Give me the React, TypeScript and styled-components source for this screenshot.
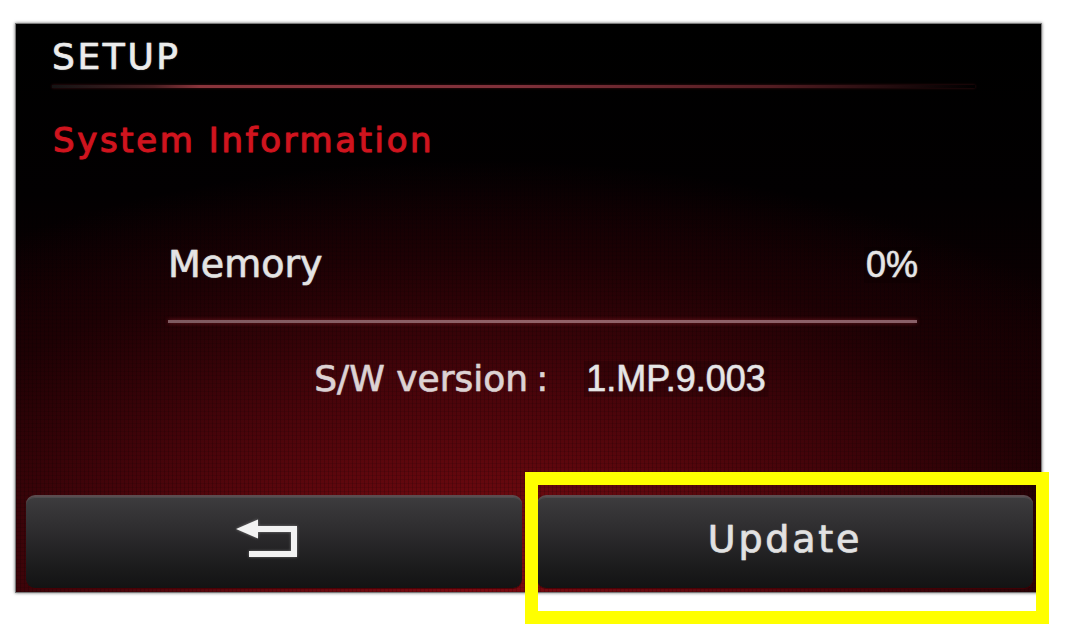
import styled, { createGlobalStyle } from 'styled-components';

const GlobalStyle = createGlobalStyle`
    html, body {
        margin: 0;
        padding: 0;
        background: #ffffff;
    }

    body {
        font-family: 'DejaVu Sans', 'Liberation Sans', sans-serif;
    }
`;

const BackIcon = (): JSX.Element => {
    return (
        <svg width="64" height="42" viewBox="0 0 64 42">
            <polygon points="0,11 22,1.5 22,20.5" fill="#f2f2f2" />
            <path
                d="M20 11 H58 V36 H13"
                fill="none"
                stroke="#f2f2f2"
                strokeWidth="6"
                strokeLinejoin="miter"
            />
        </svg>
    );
};

const App = (): JSX.Element => {
    return (
        <Page>
            <GlobalStyle />
            <Screen>
                <Header>
                    <Title>SETUP</Title>
                </Header>
                <HeaderLine />
                <SectionTitle>System Information</SectionTitle>

                <Info>
                    <InfoRow>
                        <Label>Memory</Label>
                        <Value>0%</Value>
                    </InfoRow>
                    <Divider />
                    <VersionRow>
                        <Label $size={36} $tint="#ddd3d4">S/W version</Label>
                        <Colon>:</Colon>
                        <Value>1.MP.9.003</Value>
                    </VersionRow>
                </Info>

                <ButtonRow>
                    <Button>
                        <IconSlot>
                            <BackIcon />
                        </IconSlot>
                    </Button>
                    <Button>
                        <ButtonText>Update</ButtonText>
                    </Button>
                </ButtonRow>
            </Screen>
            <Highlight />
        </Page>
    );
};

const Page = styled.div`
    background: #ffffff;
    box-sizing: border-box;
    height: 637px;
    overflow: hidden;
    padding: 23px 0 0 15px;
    position: relative;
    width: 1073px;
`;

const Screen = styled.div`
    background:
        repeating-linear-gradient(90deg, rgba(0, 0, 0, 0.16) 0 1px, transparent 1px 4px),
        repeating-linear-gradient(0deg, rgba(0, 0, 0, 0.1) 0 1px, transparent 1px 4px),
        radial-gradient(ellipse 80% 76% at 45% 100%, #7c0a11 0%, #66080e 24%, #45040a 50%, #1e0104 78%, rgba(8, 0, 1, 0) 100%),
        linear-gradient(180deg, #000000 0%, #020001 30%, #140002 62%, #260105 100%);
    border: 1px solid #7a7a7a;
    box-shadow: 0 0 3px rgba(0, 0, 0, 0.55);
    box-sizing: border-box;
    display: flex;
    flex-direction: column;
    height: 570px;
    width: 1027px;
`;

const Header = styled.div`
    padding: 15px 0 0 36px;
`;

const Title = styled.div`
    -webkit-text-stroke: 0.7px #ececec;
    color: #ececec;
    font-size: 36px;
    letter-spacing: 2.6px;
    line-height: 36px;
    text-shadow: 0 0 2px rgba(255, 255, 255, 0.35);
`;

const HeaderLine = styled.div`
    background: linear-gradient(
        90deg,
        rgba(140, 140, 140, 0.14) 0%,
        rgba(130, 55, 60, 0.55) 11%,
        #8a343b 16%,
        #80303a 50%,
        rgba(110, 38, 45, 0.75) 78%,
        rgba(60, 20, 25, 0) 100%
    );
    box-shadow: 0 0 3px rgba(140, 30, 40, 0.5);
    height: 3px;
    margin: 10px 66px 0 36px;
`;

const SectionTitle = styled.div`
    -webkit-text-stroke: 1px #d0141e;
    color: #d0141e;
    font-size: 34px;
    letter-spacing: 2.6px;
    line-height: 35px;
    margin-top: 35px;
    padding-left: 37px;
    text-shadow: 0 0 2px rgba(220, 20, 30, 0.5);
`;

const Info = styled.div`
    display: flex;
    flex-direction: column;
    padding: 0 121px 0 152px;
`;

const InfoRow = styled.div`
    align-items: baseline;
    display: flex;
    justify-content: space-between;
    line-height: 38px;
    margin-top: 87px;
`;

const Label = styled.span<{ $size?: number; $tint?: string }>`
    -webkit-text-stroke: 0.6px ${(p) => p.$tint || '#e4e4e4'};
    color: ${(p) => p.$tint || '#e4e4e4'};
    font-size: ${(p) => p.$size || 38}px;
    line-height: ${(p) => p.$size || 38}px;
    text-shadow: 0 0 2px rgba(255, 255, 255, 0.3);
`;

const Value = styled.span`
    -webkit-text-stroke: 0.5px #e6e6e6;
    background: rgba(0, 0, 0, 0.16);
    color: #e6e6e6;
    font-family: 'Liberation Sans', Arial, sans-serif;
    font-size: 36px;
    line-height: 36px;
    padding: 0 2px;
    text-shadow: 0 0 2px rgba(255, 255, 255, 0.3);
`;

const Divider = styled.div`
    background: linear-gradient(90deg, #7e5a60 0%, #926268 50%, #8a6068 100%);
    box-shadow: 0 0 4px rgba(150, 40, 50, 0.7);
    height: 3px;
    margin: 37px 3px 0 0;
`;

const VersionRow = styled.div`
    align-items: baseline;
    display: flex;
    justify-content: center;
    margin: 38px 6px 0 0;
`;

const Colon = styled.span`
    -webkit-text-stroke: 0.6px #ddd3d4;
    color: #ddd3d4;
    font-size: 36px;
    line-height: 36px;
    margin: 0 36px 0 8px;
`;

const ButtonRow = styled.div`
    display: grid;
    gap: 15px;
    grid-template-columns: 1fr 1fr;
    margin-top: auto;
    padding: 0 8px 4px 10px;
`;

const Button = styled.div`
    align-items: center;
    background: linear-gradient(180deg, #3d3c3e 0%, #2c2b2d 40%, #1c1c1d 75%, #131313 100%);
    border-radius: 9px;
    border-top: 2px solid #5b4c4f;
    box-shadow: inset 0 1px 0 rgba(255, 255, 255, 0.08), 0 1px 0 rgba(70, 0, 4, 0.8);
    box-sizing: border-box;
    display: flex;
    height: 93px;
    justify-content: center;
`;

const IconSlot = styled.div`
    display: flex;
    filter: drop-shadow(0 0 1.5px rgba(255, 255, 255, 0.35));
    margin: 0 13px 8px 0;
`;

const ButtonText = styled.span`
    -webkit-text-stroke: 0.7px #e2e2e2;
    color: #e2e2e2;
    font-size: 38px;
    letter-spacing: 2.8px;
    line-height: 38px;
    padding-bottom: 8px;
    text-shadow: 0 0 2px rgba(255, 255, 255, 0.3);
`;

const Highlight = styled.div`
    border: 13px solid #ffff00;
    box-sizing: border-box;
    height: 152px;
    left: 525px;
    pointer-events: none;
    position: absolute;
    top: 472px;
    width: 524px;
`;

export default App;
